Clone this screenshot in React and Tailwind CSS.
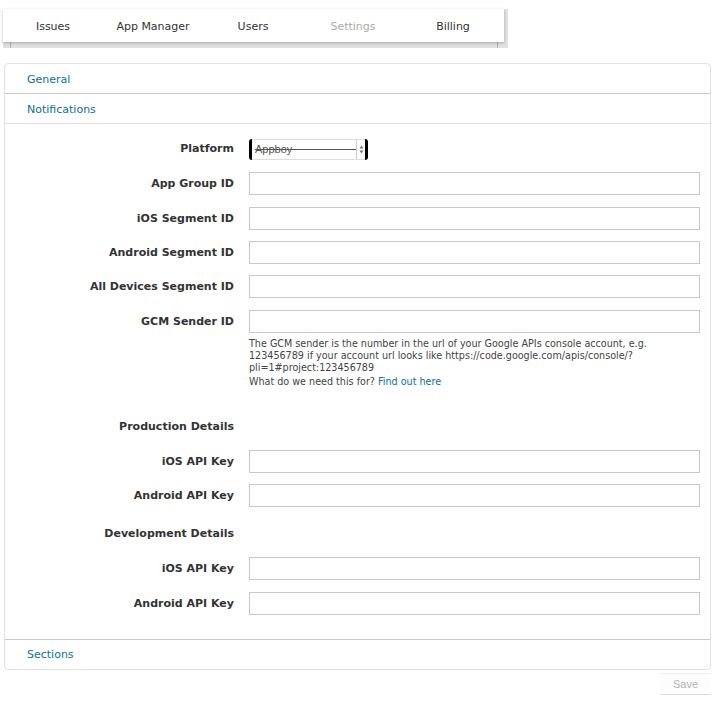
import React from "react";

const font = { fontFamily: '"DejaVu Sans", Verdana, sans-serif' };

function Label({ children }) {
  return (
    <div className="w-[229px] shrink-0 pr-0 text-right text-[11px] font-bold leading-[23px] text-[#333]">
      {children}
    </div>
  );
}

function InputRow({ label, className = "" }) {
  return (
    <div className={"flex items-start " + className}>
      <Label>{label}</Label>
      <div className="ml-[15px] h-[23px] w-[451px] border border-[#c8c8c8] bg-white" />
    </div>
  );
}

export default function App() {
  return (
    <div className="min-h-[703px] w-[715px] bg-white text-[#333]" style={font}>
      {/* top nav */}
      <div className="pt-[9px]">
        <div className="relative ml-[3px] w-[505px]">
          <div className="absolute left-0 right-0 top-0 h-[39px] bg-[#e1e1e1]" />
          <div className="absolute left-[7px] right-[10px] top-[33px] h-[6px] border-x border-[#b0b0b0]" />
          <div className="relative flex h-[33px] w-[501px] items-center bg-white pt-[4px] text-[11px] shadow-[0_1px_3px_rgba(0,0,0,0.25)]">
            <div className="w-[100px] text-center text-[#333]">Issues</div>
            <div className="w-[100px] text-center text-[#333]">App Manager</div>
            <div className="w-[100px] text-center text-[#333]">Users</div>
            <div className="w-[100px] text-center text-[#aaa]">Settings</div>
            <div className="w-[100px] text-center text-[#333]">Billing</div>
          </div>
          <div className="h-[6px]" />
        </div>
      </div>

      {/* panel */}
      <div className="ml-[4px] mt-[15px] w-[707px] rounded-[4px] border border-[#e2e2e2] bg-white">
        <div className="flex h-[30px] items-center border-b border-[#c9c9c9] pl-[22px] pt-[3px] text-[11px] text-[#0a7292]">
          General
        </div>
        <div className="flex h-[30px] items-center border-b border-[#e0e0e0] pl-[22px] pt-[4px] text-[11px] text-[#0a7292]">
          Notifications
        </div>

        <div className="pb-[24px] pt-[15px]">
          {/* Platform */}
          <div className="flex items-center">
            <div className="w-[229px] shrink-0 text-right text-[11px] font-bold text-[#333]">
              Platform
            </div>
            <div className="relative ml-[15px] flex h-[21px] w-[119px] items-center rounded-[3px] border-x-[3px] border-black bg-white">
              <div className="flex h-full flex-1 items-center border-y border-[#ddd]">
                <span
                  className="pl-[3px] text-[11px] text-[#555] line-through"
                  style={{ fontFamily: '"Liberation Sans", Arial, sans-serif' }}
                >
                  Appboy
                </span>
                <div className="h-px flex-1 bg-[#555]" />
                <div className="flex h-full w-[9px] flex-col items-center justify-center border-l border-[#ccc]">
                  <svg width="5" height="9" viewBox="0 0 5 9">
                    <path d="M2.5 0.5 L4.5 3.5 H0.5 Z" fill="#777" />
                    <path d="M2.5 8.5 L4.5 5.5 H0.5 Z" fill="#777" />
                  </svg>
                </div>
              </div>
            </div>
          </div>

          <InputRow label="App Group ID" className="mt-[12px]" />
          <InputRow label="iOS Segment ID" className="mt-[12px]" />
          <InputRow label="Android Segment ID" className="mt-[11px]" />
          <InputRow label="All Devices Segment ID" className="mt-[11px]" />
          <InputRow label="GCM Sender ID" className="mt-[12px]" />

          <div className="ml-[244px] mt-[5px] w-[455px] text-[9.6px] leading-[12px] text-[#444]">
            <p>
              The GCM sender is the number in the url of your Google APIs console account, e.g.
              <br />
              123456789 if your account url looks like https://code.google.com/apis/console/?
              <br />
              pli=1#project:123456789
            </p>
            <p className="mt-[2px]">
              What do we need this for? <span className="text-[#0a7292]">Find out here</span>
            </p>
          </div>

          <div className="mt-[27px] flex">
            <Label>Production Details</Label>
          </div>
          <InputRow label="iOS API Key" className="mt-[12px]" />
          <InputRow label="Android API Key" className="mt-[11px]" />

          <div className="mt-[15px] flex">
            <Label>Development Details</Label>
          </div>
          <InputRow label="iOS API Key" className="mt-[12px]" />
          <InputRow label="Android API Key" className="mt-[12px]" />
        </div>

        <div className="flex h-[30px] items-center border-t border-[#c9c9c9] pl-[22px] pt-[1px] text-[11px] text-[#0a7292]">
          Sections
        </div>
      </div>

      {/* save */}
      <div className="mt-[3px] flex w-[711px] justify-end">
        <div
          className="flex h-[22px] w-[51px] items-center justify-center border-b border-t border-[#eee] border-b-[#ddd] bg-[#fdfdfd] text-[11px] text-[#b3b3b3]"
          style={{ fontFamily: '"Liberation Sans", Arial, sans-serif' }}
        >
          Save
        </div>
      </div>
    </div>
  );
}
